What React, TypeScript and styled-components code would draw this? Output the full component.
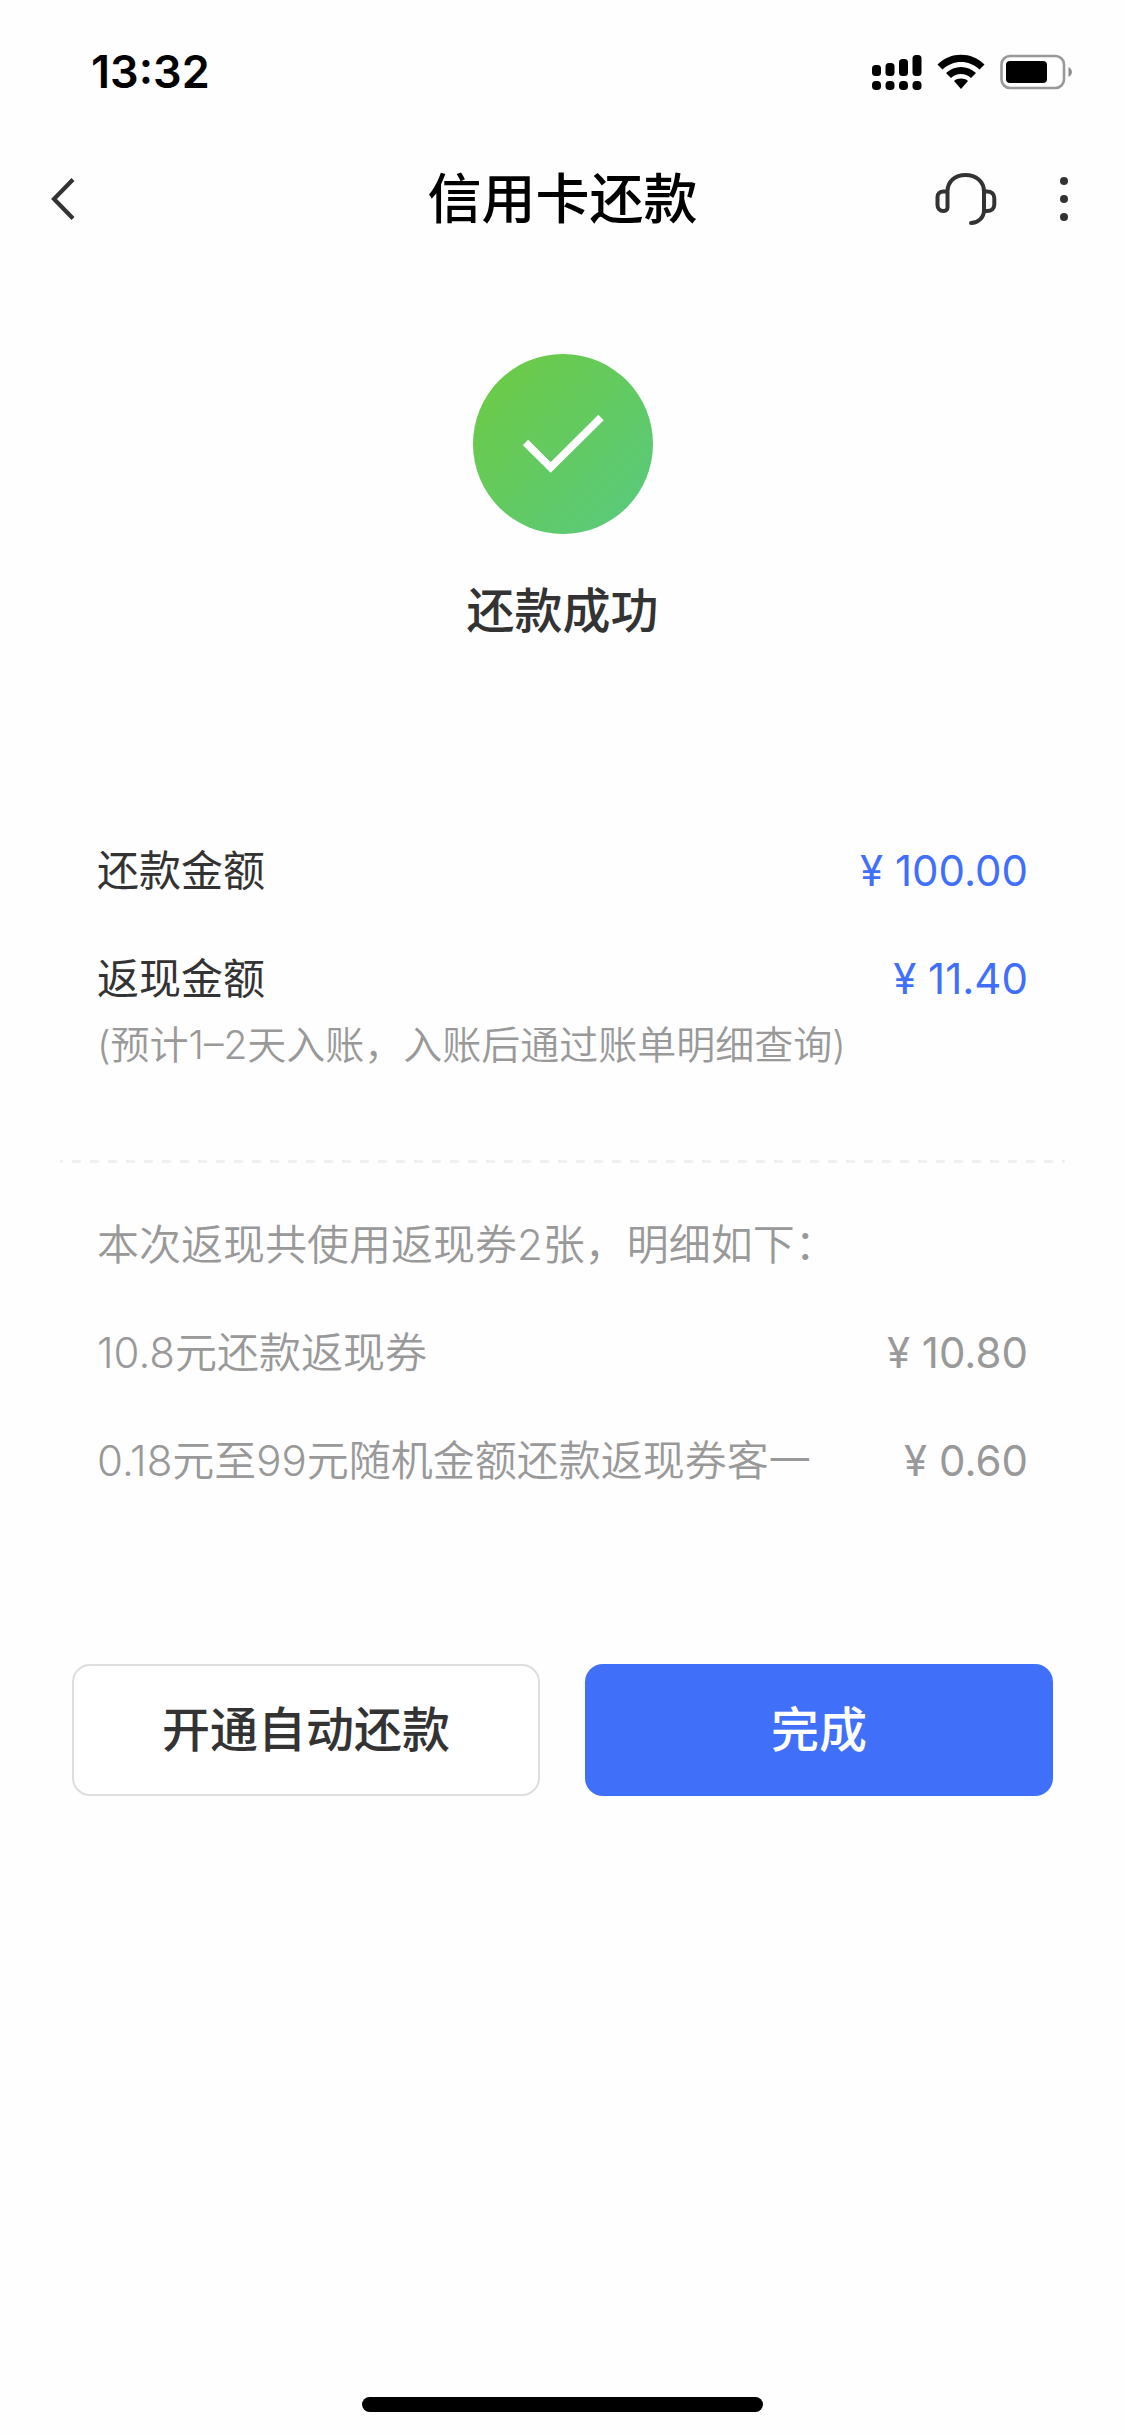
import React from 'react';
import styled, { createGlobalStyle } from 'styled-components';

const GlobalStyle = createGlobalStyle`
  *, *::before, *::after { box-sizing: border-box; }
  body {
    margin: 0;
    background: #fefefe;
    color: #333;
    font-family: Inter, "Noto Sans CJK SC", sans-serif;
  }
  h1, p, dl, dt, dd { margin: 0; padding: 0; }
`;

const Page = styled.div`
  display: flex;
  flex-direction: column;
  min-height: 100vh;
`;

const StatusBar = styled.div`
  display: flex;
  align-items: center;
  justify-content: space-between;
  height: 132px;
  padding: 11px 52px 0 91px;
`;

const Clock = styled.time`
  color: #000;
  font-size: 45px;
  font-weight: 600;
  line-height: 60px;
`;

const StatusIcons = styled.div`
  display: flex;
  align-items: center;
  gap: 15px;
`;

const NavBar = styled.header`
  display: grid;
  grid-template-columns: 1fr auto 1fr;
  align-items: center;
  height: 132px;
  padding: 1px 37px 0;
`;

const Title = styled.h1`
  padding-top: 2px;
  color: #000;
  font-size: 54px;
  font-weight: 500;
  line-height: 72px;
`;

const NavActions = styled.div`
  display: flex;
  justify-content: flex-end;
  gap: 43px;
`;

const IconButton = styled.button`
  display: flex;
  align-items: center;
  justify-content: center;
  justify-self: start;
  height: 72px;
  min-width: 48px;
  padding: 0;
  border: 0;
  background: none;
  color: #333;
`;

const Result = styled.section`
  display: flex;
  flex-direction: column;
  align-items: center;
  gap: 41px;
  padding-top: 90px;
`;

const SuccessBadge = styled.div`
  display: flex;
  width: 180px;
  height: 180px;
  border-radius: 50%;
  background: linear-gradient(135deg, #6bca48 12%, #5aca7a 90%);
`;

const ResultText = styled.p`
  font-size: 48px;
  font-weight: 500;
  line-height: 72px;
`;

const Details = styled.main`
  display: flex;
  flex-direction: column;
  padding: 194px 60px 0;
`;

const Group = styled.dl<{ $muted?: boolean }>`
  display: flex;
  flex-direction: column;
  gap: 48px;
  padding: 0 37px;
  color: ${(p) => (p.$muted ? '#999' : '#333')};
  font-size: 42px;
  font-weight: ${(p) => (p.$muted ? 350 : 400)};
  line-height: 60px;
`;

const Row = styled.div`
  display: flex;
  justify-content: space-between;
  flex-wrap: wrap;
`;

const Amount = styled.dd<{ $accent?: boolean }>`
  color: ${(p) => (p.$accent ? '#406ffa' : 'inherit')};
  font-weight: 400;
`;

const Note = styled.dd`
  flex-basis: 100%;
  margin-top: 9px;
  color: #999;
  font-size: 39px;
  font-weight: 350;
  line-height: 54px;
`;

const Divider = styled.div`
  height: 3px;
  margin: 88px 0 52px;
  background: repeating-linear-gradient(
    90deg,
    #f0f0f0 0 3px,
    transparent 3px 12px,
    #f0f0f0 12px 18px
  );
`;

const GroupHeading = styled.p`
  margin-bottom: 48px;
  padding: 0 37px;
  color: #999;
  font-size: 42px;
  font-weight: 350;
  line-height: 60px;
`;

const Actions = styled.div`
  display: grid;
  grid-template-columns: 1fr 1fr;
  gap: 45px;
  padding: 173px 72px 0;
`;

const ActionButton = styled.button<{ $primary?: boolean }>`
  height: 132px;
  padding: 0;
  border: ${(p) => (p.$primary ? '0' : '2px solid #dedede')};
  border-radius: 18px;
  background: ${(p) => (p.$primary ? '#406ffa' : '#fff')};
  color: ${(p) => (p.$primary ? '#fff' : '#333')};
  font-family: inherit;
  font-size: 48px;
  font-weight: 500;
  line-height: 72px;
`;

const HomeArea = styled.footer`
  display: flex;
  justify-content: center;
  margin-top: auto;
  padding: 48px 0 23px;
`;

const HomeIndicator = styled.div`
  width: 401px;
  height: 15px;
  border-radius: 8px;
  background: #000;
`;

const SignalIcon = () => (
  <svg width="50" height="36" viewBox="0 0 50 36" aria-hidden="true">
    <rect x="0" y="11" width="9" height="11" rx="3.5" />
    <rect x="13.5" y="9" width="9" height="13" rx="3.5" />
    <rect x="27" y="5" width="9" height="17" rx="3.5" />
    <rect x="40.5" y="1" width="9" height="21" rx="3.5" />
    {[0, 13.5, 27, 40.5].map((x) => (
      <rect key={x} x={x} y="27" width="9" height="9" rx="3.8" />
    ))}
  </svg>
);

const WifiIcon = () => (
  <svg width="48" height="36" viewBox="0 0 48 36" aria-hidden="true">
    <path d="M0.5 10.5C13.5-2.5 34.5-2.5 47.5 10.5L42.5 15.5C32 5.5 16 5.5 5.5 15.5Z" />
    <path d="M9 19C17.5 11 30.5 11 39 19L34 24C28.5 18.5 19.5 18.5 14 24Z" />
    <path d="M17 27C21 23.8 27 23.8 31 27L24 35Z" />
  </svg>
);

const BatteryIcon = () => (
  <svg width="73" height="36" viewBox="0 0 73 36" aria-hidden="true">
    <rect x="1.5" y="2" width="62.5" height="32" rx="8.5" fill="none" stroke="#999" strokeWidth="2.6" />
    <rect x="6" y="7" width="41" height="22" rx="4" />
    <path d="M68.5 13V23C73 21 73 15 68.5 13Z" fill="#8c8c8c" />
  </svg>
);

const BackIcon = () => (
  <svg width="48" height="48" viewBox="0 0 48 48" fill="none" stroke="currentColor" strokeWidth="4.2" aria-hidden="true">
    <path d="M36 4.5L17 24L36 43.5" />
  </svg>
);

const HeadsetIcon = () => (
  <svg width="62" height="54" viewBox="0 0 62 54" fill="none" stroke="currentColor" strokeWidth="4" strokeLinecap="round" strokeLinejoin="round" aria-hidden="true">
    <path d="M12.5 20V35.5C12.5 38 10.5 39 8.5 39C4.5 39 2.5 36 2.5 33V25C2.5 21.5 5 19.5 8.5 19.5H12.5C12.5 9.5 20 3 30.5 3C41 3 49 9.5 49 19.5V38.5C49 45.5 43 51 36 51" />
    <path d="M49 19.5H52C56.5 19.5 59.3 22 59.3 26V32.5C59.3 36.5 56.5 39 52 39H49" />
  </svg>
);

const MoreIcon = () => (
  <svg width="10" height="46" viewBox="0 0 10 46" fill="currentColor" aria-hidden="true">
    <circle cx="5" cy="5" r="4" />
    <circle cx="5" cy="23" r="4" />
    <circle cx="5" cy="41" r="4" />
  </svg>
);

const CheckIcon = () => (
  <svg width="180" height="180" viewBox="0 0 180 180" fill="none" stroke="#fff" strokeWidth="7.5" aria-hidden="true">
    <path d="M52.5 88.5L77.7 113.5L128 63.5" />
  </svg>
);

const coupons = [
  { name: '10.8元还款返现券', amount: '¥ 10.80' },
  { name: '0.18元至99元随机金额还款返现券客一', amount: '¥ 0.60' },
];

export default function App() {
  return (
    <Page lang="zh-CN">
      <GlobalStyle />
      <StatusBar>
        <Clock>13:32</Clock>
        <StatusIcons>
          <SignalIcon />
          <WifiIcon />
          <BatteryIcon />
        </StatusIcons>
      </StatusBar>
      <NavBar>
        <IconButton type="button" aria-label="返回">
          <BackIcon />
        </IconButton>
        <Title>信用卡还款</Title>
        <NavActions>
          <IconButton type="button" aria-label="客服">
            <HeadsetIcon />
          </IconButton>
          <IconButton type="button" aria-label="更多">
            <MoreIcon />
          </IconButton>
        </NavActions>
      </NavBar>
      <Result>
        <SuccessBadge>
          <CheckIcon />
        </SuccessBadge>
        <ResultText>还款成功</ResultText>
      </Result>
      <Details>
        <Group>
          <Row>
            <dt>还款金额</dt>
            <Amount $accent>¥ 100.00</Amount>
          </Row>
          <Row>
            <dt>返现金额</dt>
            <Amount $accent>¥ 11.40</Amount>
            <Note>(预计1–2天入账，入账后通过账单明细查询)</Note>
          </Row>
        </Group>
        <Divider />
        <GroupHeading>本次返现共使用返现券2张，明细如下：</GroupHeading>
        <Group $muted>
          {coupons.map((c) => (
            <Row key={c.name}>
              <dt>{c.name}</dt>
              <Amount>{c.amount}</Amount>
            </Row>
          ))}
        </Group>
      </Details>
      <Actions>
        <ActionButton type="button">开通自动还款</ActionButton>
        <ActionButton type="button" $primary>完成</ActionButton>
      </Actions>
      <HomeArea>
        <HomeIndicator />
      </HomeArea>
    </Page>
  );
}
